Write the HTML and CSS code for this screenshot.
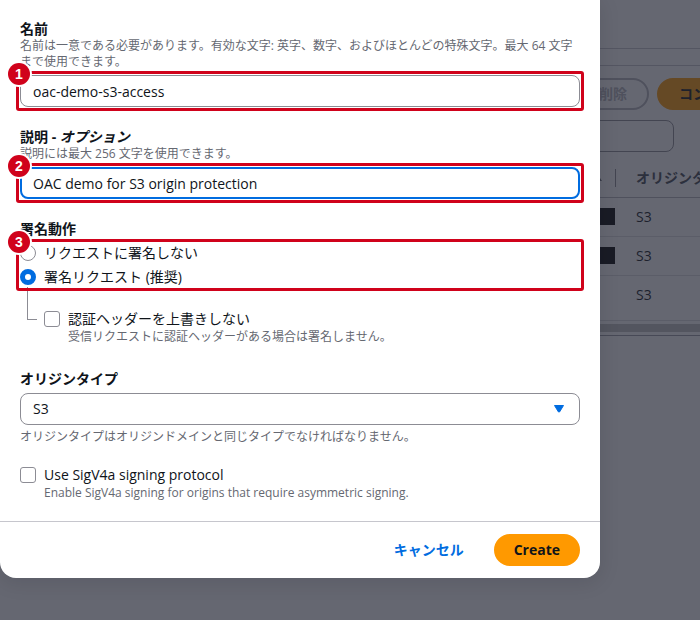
FILE: index.html
```html
<!DOCTYPE html>
<html lang="ja">
<head>
    <meta charset="UTF-8">
    <meta name="viewport" content="width=device-width, initial-scale=1.0">
    <title>コントロール設定を作成</title>
    <link rel="stylesheet" href="styles.css">
</head>
<body>

<!-- 背景のページ -->
<main class="page">
    <div class="topbar"></div>
    <section class="panel">
        <div class="toolbar">
            <button type="button" class="btn btn-disabled" disabled>削除</button>
            <button type="button" class="btn btn-primary">コントロール設定を作成</button>
        </div>
        <input type="search" class="search" aria-label="検索">
        <table class="list">
            <thead>
                <tr>
                    <th class="col-name"><span class="sort"></span></th>
                    <th>オリジンタイプ</th>
                </tr>
            </thead>
            <tbody>
                <tr><td class="col-name"><span class="masked"></span></td><td>S3</td></tr>
                <tr><td class="col-name"><span class="masked"></span></td><td>S3</td></tr>
                <tr><td class="col-name"></td><td>S3</td></tr>
            </tbody>
        </table>
        <div class="scrollbar"></div>
    </section>
</main>

<!-- モーダル -->
<div class="backdrop">
    <form class="modal" role="dialog" aria-label="コントロール設定を作成">
        <div class="modal-body">
            <div class="field">
                <label class="label" for="name">名前</label>
                <p class="hint" id="name-hint">名前は一意である必要があります。有効な文字: 英字、数字、およびほとんどの特殊文字。最大 64 文字まで使用できます。</p>
                <div class="control">
                    <input type="text" class="text-input" id="name" value="oac-demo-s3-access" aria-describedby="name-hint">
                    <div class="mark"><span class="mark-number">1</span></div>
                </div>
            </div>

            <div class="field">
                <label class="label" for="description">説明 - <em>オプション</em></label>
                <p class="hint" id="description-hint">説明には最大 256 文字を使用できます。</p>
                <div class="control">
                    <input type="text" class="text-input active" id="description" value="OAC demo for S3 origin protection" aria-describedby="description-hint">
                    <div class="mark"><span class="mark-number">2</span></div>
                </div>
            </div>

            <div class="field" role="radiogroup" aria-labelledby="signing-label">
                <div class="label" id="signing-label">署名動作</div>
                <div class="control radios">
                    <label class="choice"><input type="radio" name="signing" value="never">リクエストに署名しない</label>
                    <label class="choice"><input type="radio" name="signing" value="always" checked>署名リクエスト (推奨)</label>
                    <div class="mark"><span class="mark-number">3</span></div>
                </div>
                <div class="nested">
                    <div>
                        <label class="choice"><input type="checkbox" name="no-override">認証ヘッダーを上書きしない</label>
                        <p class="hint choice-hint">受信リクエストに認証ヘッダーがある場合は署名しません。</p>
                    </div>
                </div>
            </div>

            <div class="field">
                <label class="label" for="origin-type">オリジンタイプ</label>
                <div class="control">
                    <select class="select" id="origin-type">
                        <option>S3</option>
                    </select>
                    <svg class="arrow" viewBox="0 0 10 8" aria-hidden="true"><path d="M.5 .5h9L5.5 7h-1z" fill="#006ce0" stroke="#006ce0" stroke-linejoin="round"/></svg>
                </div>
                <p class="hint below">オリジンタイプはオリジンドメインと同じタイプでなければなりません。</p>
            </div>

            <div class="field">
                <label class="choice"><input type="checkbox" name="sigv4a">Use SigV4a signing protocol</label>
                <p class="hint choice-hint">Enable SigV4a signing for origins that require asymmetric signing.</p>
            </div>
        </div>

        <footer class="modal-footer">
            <button type="button" class="btn btn-link">キャンセル</button>
            <button type="button" class="btn btn-primary">Create</button>
        </footer>
    </form>
</div>

</body>
</html>
```
FILE: styles.css
```css
* {
    box-sizing: border-box;
}

body {
    margin: 0;
    min-height: 100vh;
    font-family: "Open Sans", "Noto Sans CJK JP", sans-serif;
    font-size: 14px;
    line-height: 20px;
    color: #0f141a;
    background: #fff;
}

input, select, button {
    font: inherit;
    color: inherit;
}

/* ボタン */
.btn {
    height: 32px;
    padding: 0 18px;
    border: 2px solid transparent;
    border-radius: 16px;
    background: none;
    font-weight: 700;
    white-space: nowrap;
}

.btn-primary {
    background: #ff9900;
    border-color: #ff9900;
}

.btn-link {
    color: #006ce0;
}

.btn-disabled {
    border-color: #b4b4bb;
    color: #b4b4bb;
}

/* 背景のページ */
.page {
    overflow: hidden;
}

.topbar {
    height: 49px;
    border-bottom: 1px solid #c6c6cd;
}

.panel {
    margin-top: 16px;
    padding-top: 12px;
    border-top: 1px solid #c6c6cd;
    border-bottom: 1px solid #9a9aa3;
}

.toolbar {
    display: grid;
    grid-template-columns: 649px minmax(0, 1fr);
    gap: 8px;
    margin-bottom: 10px;
}

.toolbar .btn {
    justify-self: start;
    padding: 0 20px;
}

.toolbar .btn-disabled {
    justify-self: end;
}

.search {
    display: block;
    width: 674px;
    height: 32px;
    border: 1px solid #8c8c94;
    border-radius: 8px;
    background: #fff;
    appearance: none;
}

.list {
    width: 100%;
    margin-top: 8px;
    border-collapse: collapse;
    table-layout: fixed;
    text-align: left;
}

.list th {
    height: 37px;
    padding: 0 0 0 20px;
    border-bottom: 1px solid #b4b4bb;
    color: #424650;
    white-space: nowrap;
    overflow: hidden;
}

.list td {
    height: 39px;
    padding: 0 0 0 20px;
    border-bottom: 1px solid #dcdce2;
}

.list tr:last-child td {
    padding-bottom: 6px;
    height: 45px;
}

.list tr > .col-name {
    width: 616px;
    padding: 0;
}

.sort {
    display: flex;
    align-items: center;
    justify-content: flex-end;
    height: 18px;
    padding-right: 13px;
    border-right: 1px solid #8c8c94;
}

.sort::after {
    content: "";
    border: 4px solid transparent;
    border-top: 0;
    border-bottom: 6px solid #656871;
}

.masked {
    display: block;
    width: 120px;
    height: 17px;
    margin-left: auto;
    margin-right: 1px;
    background: #000;
}

.scrollbar {
    height: 8px;
    margin: 3px 0;
    background: #c1c1c1;
}

/* モーダル */
.backdrop {
    position: absolute;
    inset: 0;
    background: rgba(35, 39, 52, 0.7);
}

.modal {
    width: 100%;
    max-width: 600px;
    border-radius: 0 0 16px 16px;
    background: #fff;
    box-shadow: 0 4px 20px 1px rgba(0, 7, 22, 0.1);
}

.modal-body {
    display: flex;
    flex-direction: column;
    gap: 20px;
    padding: 19px 20px 20px;
}

.modal-footer {
    display: flex;
    justify-content: flex-end;
    gap: 10px;
    padding: 12px 20px;
    border-top: 1px solid #c6c6cd;
}

/* フォーム */
.label {
    display: block;
    font-weight: 700;
    line-height: 19px;
}

.hint {
    margin: 0;
    font-size: 12px;
    line-height: 16px;
    color: #656871;
}

.hint.below {
    margin-top: 4px;
}

.control {
    position: relative;
    margin-top: 5px;
}

.text-input, .select {
    display: block;
    width: 100%;
    height: 32px;
    padding: 0 12px;
    border: 1px solid #8c8c94;
    border-radius: 8px;
    background: #fff;
    outline: none;
    appearance: none;
}

.text-input.active {
    padding: 0 11px;
    border: 2px solid #006ce0;
}

.arrow {
    position: absolute;
    top: 12px;
    right: 16px;
    width: 10px;
    height: 8px;
    pointer-events: none;
}

.radios {
    display: flex;
    flex-direction: column;
    gap: 4px;
}

.choice {
    display: flex;
    align-items: center;
    gap: 8px;
}

.choice input {
    width: 16px;
    height: 16px;
    margin: 0;
    border: 1px solid #8c8c94;
    border-radius: 3px;
    background: #fff;
    appearance: none;
}

.choice input[type="radio"] {
    border-radius: 50%;
}

.choice input[type="radio"]:checked {
    border: 5px solid #006ce0;
}

.choice-hint {
    padding-left: 24px;
}

.nested {
    display: flex;
    padding: 0 0 4px 7px;
}

.nested::before {
    content: "";
    width: 10px;
    height: 33px;
    margin-right: 7px;
    border-left: 1px solid #8c8c94;
    border-bottom: 1px solid #8c8c94;
    box-sizing: border-box;
}

.nested > div {
    padding-top: 22px;
}

/* 手順の赤枠と番号 */
.mark {
    position: absolute;
    inset: -4px;
    border: 3px solid #d0021b;
    border-radius: 3px;
    pointer-events: none;
}

.mark-number {
    position: absolute;
    top: -11px;
    left: -11px;
    width: 22px;
    height: 22px;
    border-radius: 50%;
    background: #d0021b;
    box-shadow: 0 0 0 2px #fff;
    color: #fff;
    font-family: "Liberation Sans", sans-serif;
    font-weight: 700;
    line-height: 22px;
    text-align: center;
}
```
